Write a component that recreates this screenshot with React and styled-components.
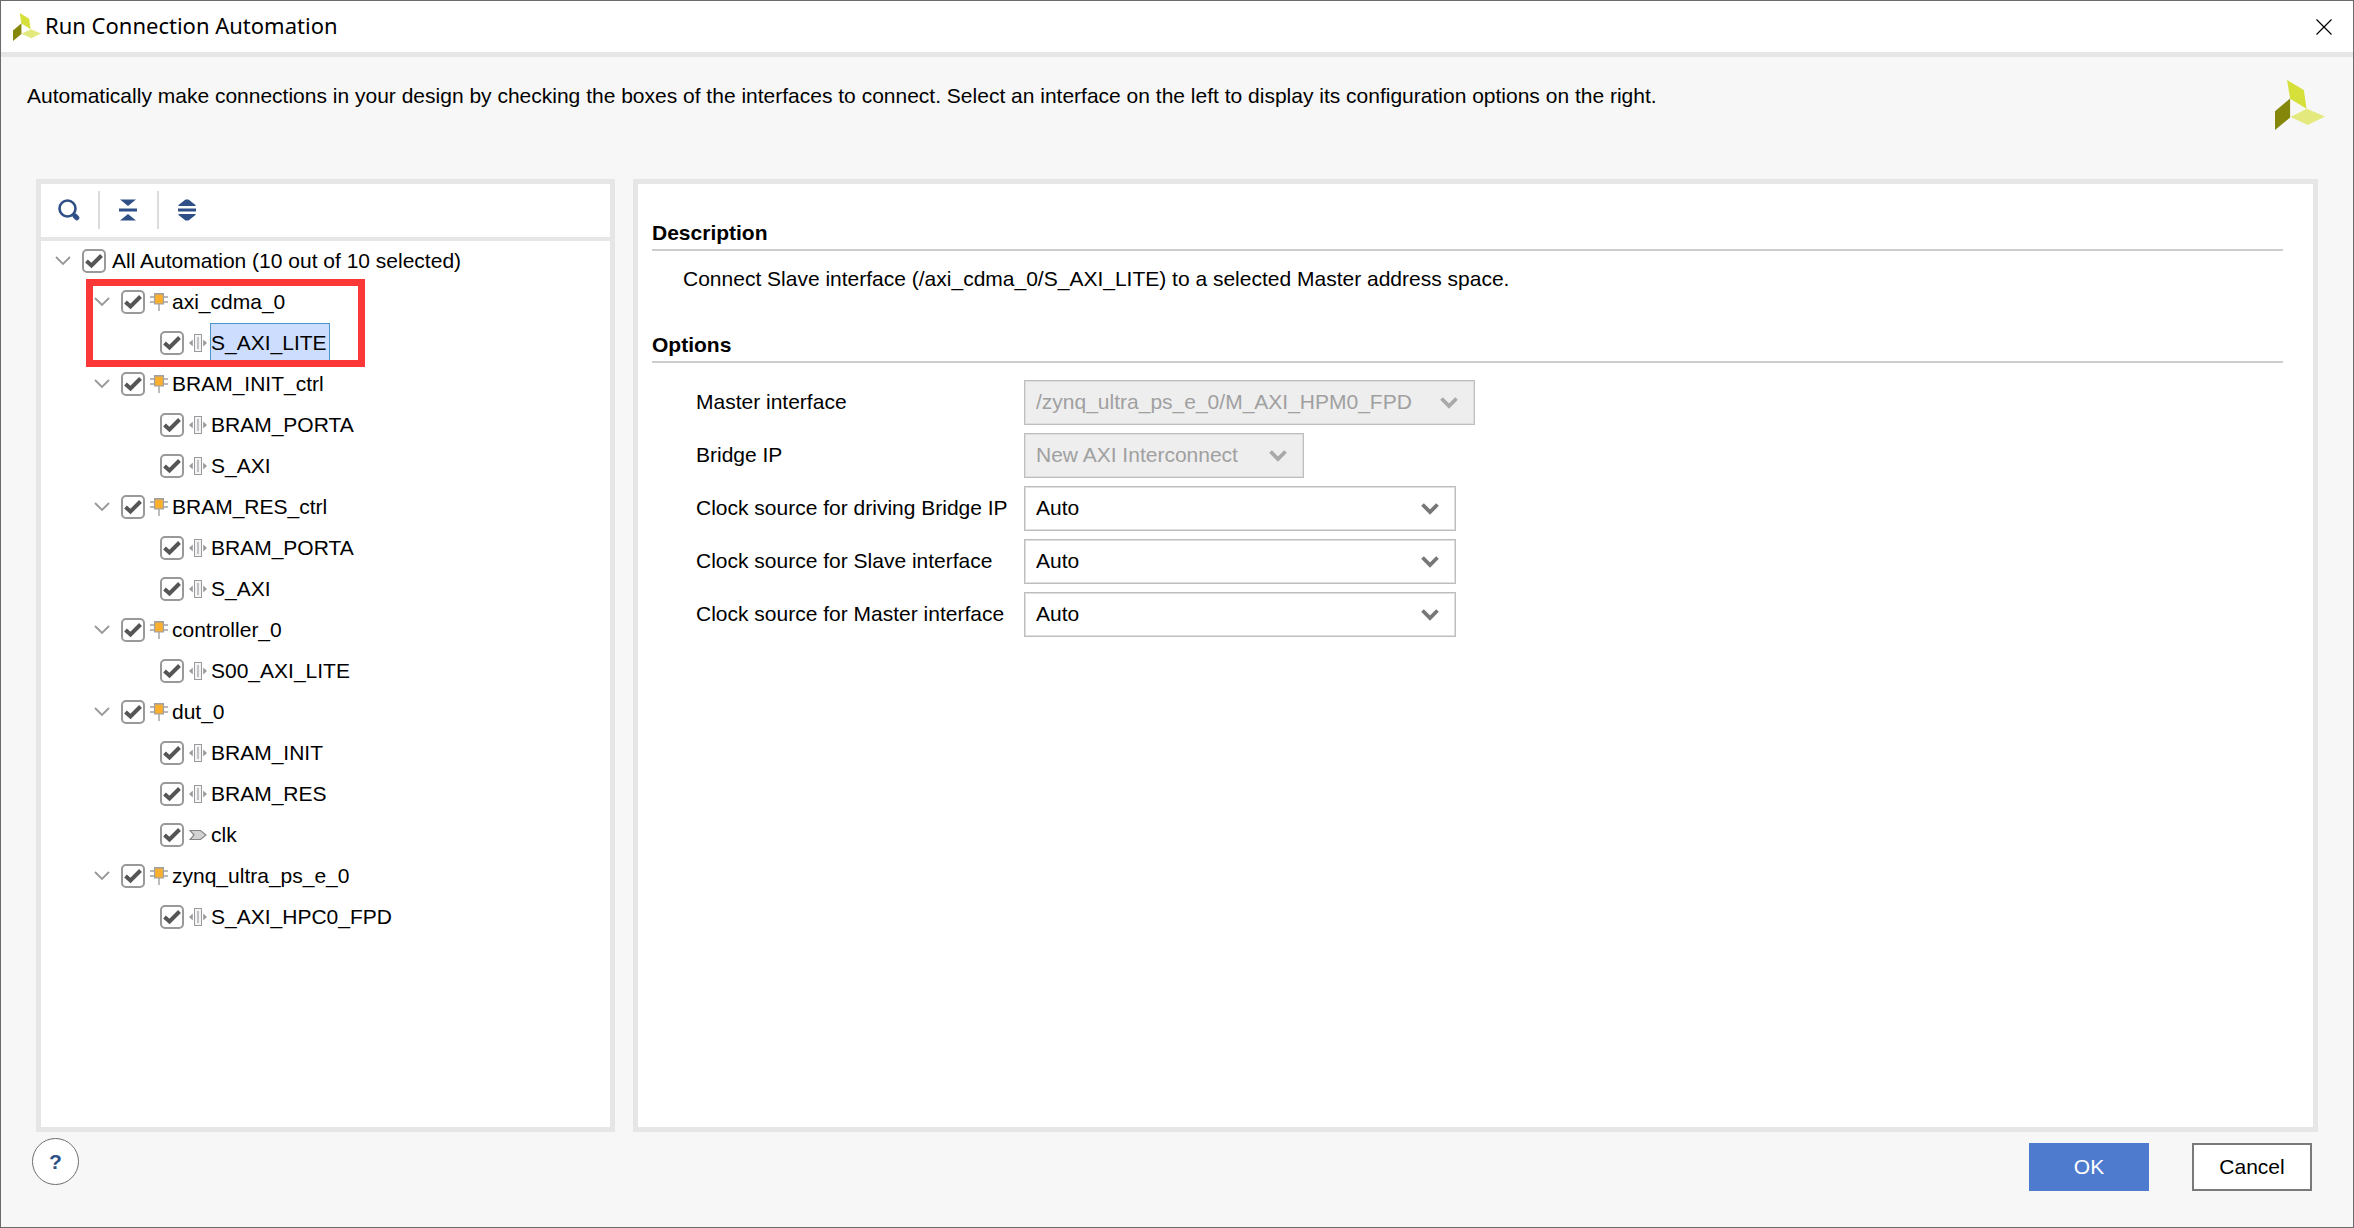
import React, { useState } from "react";
import styled, { createGlobalStyle } from "styled-components";

const TREE = [
  { name: "axi_cdma_0", marked: true, ports: ["S_AXI_LITE"] },
  { name: "BRAM_INIT_ctrl", ports: ["BRAM_PORTA", "S_AXI"] },
  { name: "BRAM_RES_ctrl", ports: ["BRAM_PORTA", "S_AXI"] },
  { name: "controller_0", ports: ["S00_AXI_LITE"] },
  { name: "dut_0", ports: ["BRAM_INIT", "BRAM_RES", "clk"] },
  { name: "zynq_ultra_ps_e_0", ports: ["S_AXI_HPC0_FPD"] },
];

const OPTIONS = [
  { id: "master", label: "Master interface", value: "/zynq_ultra_ps_e_0/M_AXI_HPM0_FPD", width: 451, disabled: true },
  { id: "bridge", label: "Bridge IP", value: "New AXI Interconnect", width: 280, disabled: true },
  { id: "clk-bridge", label: "Clock source for driving Bridge IP", value: "Auto", width: 432 },
  { id: "clk-slave", label: "Clock source for Slave interface", value: "Auto", width: 432 },
  { id: "clk-master", label: "Clock source for Master interface", value: "Auto", width: 432 },
];

const allPorts = TREE.flatMap((b) => b.ports.map((p) => `${b.name}/${p}`));

const Logo = ({ size }) => (
  <svg width={size} height={size} viewBox="0 0 149 149" aria-hidden="true">
    <polygon points="36,0 86,30 94,86 45,56" fill="#d6e03a" />
    <polygon points="0,93 45,55 45,112 0,149" fill="#84870a" />
    <polygon points="46,110 95,86 149,109 98,134" fill="#e3e97c" />
  </svg>
);

const BlockIcon = () => (
  <svg width="18" height="18" viewBox="0 0 18 18" aria-hidden="true">
    <path d="M0 4H18M0 9H18M9 11V18" stroke="#a0a0a0" strokeWidth="1.4" />
    <rect x="4" y="0" width="10" height="11.5" fill="#a0a0a0" />
    <rect x="5.2" y="1.6" width="7.6" height="8.8" fill="#fbb02d" />
  </svg>
);

const InterfaceIcon = () => (
  <svg width="18" height="18" viewBox="0 0 18 18" aria-hidden="true">
    <path d="M0 9L3.8 5.6V12.4ZM18 9L14.2 5.6V12.4Z" fill="#9a9a9a" />
    <rect x="5.5" y="0.5" width="7" height="17" fill="#f4f4f6" stroke="#9a9a9a" />
    <path d="M9 3V15" stroke="#b4b4b8" strokeWidth="1.6" />
  </svg>
);

const ClockIcon = () => (
  <svg width="18" height="18" viewBox="0 0 18 18" aria-hidden="true">
    <path d="M1 4.5H11.5L17 9L11.5 13.5H1L5 9Z" fill="#d2d2d2" stroke="#868686" strokeWidth="1.2" />
  </svg>
);

const Check = ({ label, checked, onChange }) => (
  <CheckCell>
    <input type="checkbox" aria-label={label} checked={checked} onChange={onChange} />
    <svg width="24" height="24" viewBox="0 0 24 24" aria-hidden="true">
      <path d="M4.5 12L9.5 16.5L19.5 6.5" fill="none" stroke="#555555" strokeWidth="4" />
    </svg>
  </CheckCell>
);

const Toggle = ({ open, onClick, name }) => (
  <ToggleButton type="button" $open={open} onClick={onClick} aria-label={`Toggle ${name}`}>
    <svg width="16" height="10" viewBox="0 0 16 10" aria-hidden="true">
      <path d="M1 1L8 8L15 1" fill="none" stroke="#999999" strokeWidth="1.8" />
    </svg>
  </ToggleButton>
);

const App = () => {
  const [checked, setChecked] = useState(allPorts);
  const [closed, setClosed] = useState([]);
  const [selected, setSelected] = useState("axi_cdma_0/S_AXI_LITE");

  const toggleChecked = (keys) => {
    const allOn = keys.every((k) => checked.includes(k));
    const rest = checked.filter((k) => !keys.includes(k));
    setChecked(allOn ? rest : [...rest, ...keys]);
  };

  const toggleOpen = (name) => {
    setClosed(closed.includes(name) ? closed.filter((n) => n !== name) : [...closed, name]);
  };

  const isOpen = (name) => !closed.includes(name);

  return (
    <>
      <GlobalStyle />
      <Dialog>
        <TitleBar>
          <Logo size={28} />
          <h1>Run Connection Automation</h1>
          <CloseButton type="button" aria-label="Close">
            <svg width="16" height="16" viewBox="0 0 16 16" aria-hidden="true">
              <path d="M0.5 0.5L15.5 15.5M15.5 0.5L0.5 15.5" stroke="#000000" strokeWidth="1.2" />
            </svg>
          </CloseButton>
        </TitleBar>

        <Intro>
          <p>
            Automatically make connections in your design by checking the boxes of the interfaces to
            connect. Select an interface on the left to display its configuration options on the right.
          </p>
          <Logo size={50} />
        </Intro>

        <Content>
          <TreePanel>
            <Toolbar>
              <ToolButton type="button" aria-label="Search">
                <svg width="22" height="22" viewBox="0 0 22 22" aria-hidden="true">
                  <circle cx="9.5" cy="9.5" r="8" fill="none" stroke="#2f4f87" strokeWidth="2.6" />
                  <path d="M17 17L18.8 18.8" stroke="#2f4f87" strokeWidth="5" strokeLinecap="round" />
                </svg>
              </ToolButton>
              <ToolButton
                type="button"
                aria-label="Collapse all"
                onClick={() => setClosed(TREE.map((b) => b.name))}
              >
                <svg width="18" height="22" viewBox="0 0 18 22" aria-hidden="true">
                  <path d="M1 0.5H17L9 7ZM0 9.5H18V12.5H0ZM1 21.5H17L9 15Z" fill="#2f4f87" />
                </svg>
              </ToolButton>
              <ToolButton type="button" aria-label="Expand all" onClick={() => setClosed([])}>
                <svg width="18" height="22" viewBox="0 0 18 22" aria-hidden="true">
                  <path d="M0.5 7V6L7.5 0.5H10.5L17.5 6V7ZM0 9.5H18V12.5H0ZM0.5 15V16L7.5 21.5H10.5L17.5 16V15Z" fill="#2f4f87" />
                </svg>
              </ToolButton>
            </Toolbar>

            <Tree>
              <Row $level={0}>
                <Toggle name="All Automation" open={isOpen("root")} onClick={() => toggleOpen("root")} />
                <Check
                  label="All Automation"
                  checked={checked.length === allPorts.length}
                  onChange={() => toggleChecked(allPorts)}
                />
                <NodeName type="button">
                  All Automation ({checked.length} out of {allPorts.length} selected)
                </NodeName>
              </Row>
              {isOpen("root") &&
                TREE.map((block) => {
                  const keys = block.ports.map((p) => `${block.name}/${p}`);
                  return (
                    <Group key={block.name}>
                      <Row $level={1}>
                        <Toggle
                          name={block.name}
                          open={isOpen(block.name)}
                          onClick={() => toggleOpen(block.name)}
                        />
                        <Check
                          label={block.name}
                          checked={keys.every((k) => checked.includes(k))}
                          onChange={() => toggleChecked(keys)}
                        />
                        <NodeIcon><BlockIcon /></NodeIcon>
                        <NodeName type="button">{block.name}</NodeName>
                      </Row>
                      {isOpen(block.name) &&
                        block.ports.map((port) => {
                          const key = `${block.name}/${port}`;
                          return (
                            <Row key={key} $level={2}>
                              <Check
                                label={port}
                                checked={checked.includes(key)}
                                onChange={() => toggleChecked([key])}
                              />
                              <NodeIcon>{port === "clk" ? <ClockIcon /> : <InterfaceIcon />}</NodeIcon>
                              <NodeName
                                type="button"
                                $selected={selected === key}
                                onClick={() => setSelected(key)}
                              >
                                {port}
                              </NodeName>
                            </Row>
                          );
                        })}
                      {block.marked && <Marker />}
                    </Group>
                  );
                })}
            </Tree>
          </TreePanel>

          <DetailPanel>
            <SectionTitle>Description</SectionTitle>
            <Description>
              Connect Slave interface (/axi_cdma_0/S_AXI_LITE) to a selected Master address space.
            </Description>
            <SectionTitle>Options</SectionTitle>
            <OptionList>
              {OPTIONS.map((o) => (
                <OptionRow key={o.id}>
                  <label htmlFor={o.id}>{o.label}</label>
                  <SelectBox $width={o.width} $disabled={o.disabled}>
                    <select id={o.id} disabled={o.disabled} defaultValue={o.value}>
                      <option>{o.value}</option>
                    </select>
                    <svg width="18" height="12" viewBox="0 0 18 12" aria-hidden="true">
                      <path d="M1.5 1.5L9 9L16.5 1.5" fill="none" stroke="currentColor" strokeWidth="3.8" />
                    </svg>
                  </SelectBox>
                </OptionRow>
              ))}
            </OptionList>
          </DetailPanel>
        </Content>

        <Footer>
          <HelpButton type="button" aria-label="Help">?</HelpButton>
          <Actions>
            <ActionButton type="button" $primary>OK</ActionButton>
            <ActionButton type="button">Cancel</ActionButton>
          </Actions>
        </Footer>
      </Dialog>
    </>
  );
};

export default App;

const GlobalStyle = createGlobalStyle`
  * {
    box-sizing: border-box;
  }
  body {
    margin: 0;
    font-family: "Liberation Sans", Arial, sans-serif;
    font-size: 21px;
    line-height: 24px;
    color: #000000;
  }
  h1, h2, p, ul {
    margin: 0;
    padding: 0;
  }
  button, select {
    font: inherit;
    color: inherit;
    cursor: pointer;
  }
  svg {
    display: block;
    flex-shrink: 0;
  }
`;

const Dialog = styled.div`
  min-height: 100vh;
  display: flex;
  flex-direction: column;
  background-color: #f7f7f7;
  border: 1px solid #6b6b6b;
`;

const TitleBar = styled.header`
  display: flex;
  align-items: center;
  height: 56px;
  padding: 0 21px 0 12px;
  background-color: #ffffff;
  border-bottom: 5px solid #e6e6e6;

  h1 {
    margin-left: 4px;
    padding-bottom: 3px;
    font-family: "Noto Sans", "Open Sans", sans-serif;
    font-size: 22px;
    font-weight: 400;
  }
`;

const CloseButton = styled.button`
  margin-left: auto;
  padding: 0;
  border: none;
  background: none;
`;

const Intro = styled.div`
  display: flex;
  justify-content: space-between;
  align-items: flex-start;
  min-height: 122px;
  padding: 23px 28px 0 26px;

  p {
    padding-top: 4px;
  }
`;

const Content = styled.main`
  flex: 1;
  display: flex;
  gap: 18px;
  padding: 0 35px;
`;

const Panel = styled.section`
  background-color: #ffffff;
  border: 5px solid #e6e6e6;
`;

const TreePanel = styled(Panel)`
  flex: 0 0 579px;
`;

const Toolbar = styled.div`
  display: flex;
  align-items: center;
  height: 57px;
  padding-bottom: 1px;
  border-bottom: 4px solid #e6e6e6;
`;

const ToolButton = styled.button`
  display: flex;
  align-items: center;
  justify-content: center;
  width: 59px;
  height: 38px;
  padding: 0 1px 0 0;
  border: none;
  border-right: 2px solid #dcdcdc;
  background: none;

  &:last-child {
    border-right-color: transparent;
  }
`;

const Tree = styled.ul`
  list-style: none;
`;

const Group = styled.div`
  position: relative;
`;

const Row = styled.li`
  display: flex;
  align-items: center;
  height: 41px;
  padding-bottom: 1px;
  padding-left: ${(p) => [14, 53, 119][p.$level]}px;
`;

const ToggleButton = styled.button`
  display: flex;
  padding: 0;
  margin-right: 11px;
  border: none;
  background: none;
  transform: ${(p) => (p.$open ? "none" : "rotate(-90deg)")};
`;

const CheckCell = styled.span`
  display: grid;
  width: 24px;
  height: 24px;

  input, svg {
    grid-area: 1 / 1;
  }
  input {
    appearance: none;
    width: 24px;
    height: 24px;
    margin: 0;
    border: 2px solid #999999;
    border-radius: 5px;
    background-color: #ffffff;
  }
  svg {
    visibility: hidden;
    pointer-events: none;
  }
  input:checked + svg {
    visibility: visible;
  }
`;

const NodeIcon = styled.span`
  margin-left: 5px;
  margin-right: -2px;
`;

const NodeName = styled.button`
  height: 40px;
  margin-left: 5px;
  padding: 0 2px 1px 0;
  white-space: nowrap;
  border: 1px solid ${(p) => (p.$selected ? "#4a94cc" : "transparent")};
  background-color: ${(p) => (p.$selected ? "#ccddfe" : "transparent")};
`;

// red frame laid over the highlighted block
const Marker = styled.div`
  position: absolute;
  top: -3px;
  bottom: -3px;
  left: 45px;
  width: 279px;
  border: 7px solid #fb3737;
  pointer-events: none;
  z-index: 1;
`;

const DetailPanel = styled(Panel)`
  flex: 1;
  padding: 37px 30px 30px 14px;
`;

const SectionTitle = styled.h2`
  padding-bottom: 4px;
  font-size: 21px;
  font-weight: 700;
  border-bottom: 2px solid #cdcdcd;
`;

const Description = styled.p`
  margin: 16px 0 42px;
  padding-left: 31px;
`;

const OptionList = styled.div`
  display: flex;
  flex-direction: column;
  gap: 8px;
  padding: 17px 0 0 44px;
`;

const OptionRow = styled.div`
  display: flex;
  align-items: center;

  label {
    width: 328px;
    padding-bottom: 2px;
  }
`;

const SelectBox = styled.div`
  display: grid;
  align-items: center;
  width: ${(p) => p.$width}px;
  height: 45px;
  color: ${(p) => (p.$disabled ? "#a0a0a0" : "#000000")};

  select, svg {
    grid-area: 1 / 1;
  }
  select {
    appearance: none;
    width: 100%;
    height: 45px;
    padding: 0 48px 2px 11px;
    border: 1px solid #bebebe;
    border-radius: 0;
    box-shadow: inset 0 0 0 1px #dedede;
    background-color: ${(p) => (p.$disabled ? "#eeeeee" : "#ffffff")};
    opacity: 1;
  }
  svg {
    justify-self: end;
    margin-right: 17px;
    color: ${(p) => (p.$disabled ? "#a9a9a9" : "#777777")};
    pointer-events: none;
  }
`;

const Footer = styled.footer`
  display: flex;
  justify-content: space-between;
  align-items: flex-start;
  padding: 6px 41px 36px 31px;
`;

const HelpButton = styled.button`
  width: 47px;
  height: 47px;
  padding: 0;
  border: 1px solid #6e6e6e;
  border-radius: 50%;
  background-color: #ffffff;
  color: #2f4f87;
  font-weight: 700;
`;

const Actions = styled.div`
  display: flex;
  gap: 43px;
  padding-top: 5px;
`;

const ActionButton = styled.button`
  width: 120px;
  height: 48px;
  padding: 0;
  border: 2px solid ${(p) => (p.$primary ? "#4f7bcf" : "#7a7a7a")};
  background-color: ${(p) => (p.$primary ? "#4f7bcf" : "#ffffff")};
  color: ${(p) => (p.$primary ? "#ffffff" : "#000000")};
`;
